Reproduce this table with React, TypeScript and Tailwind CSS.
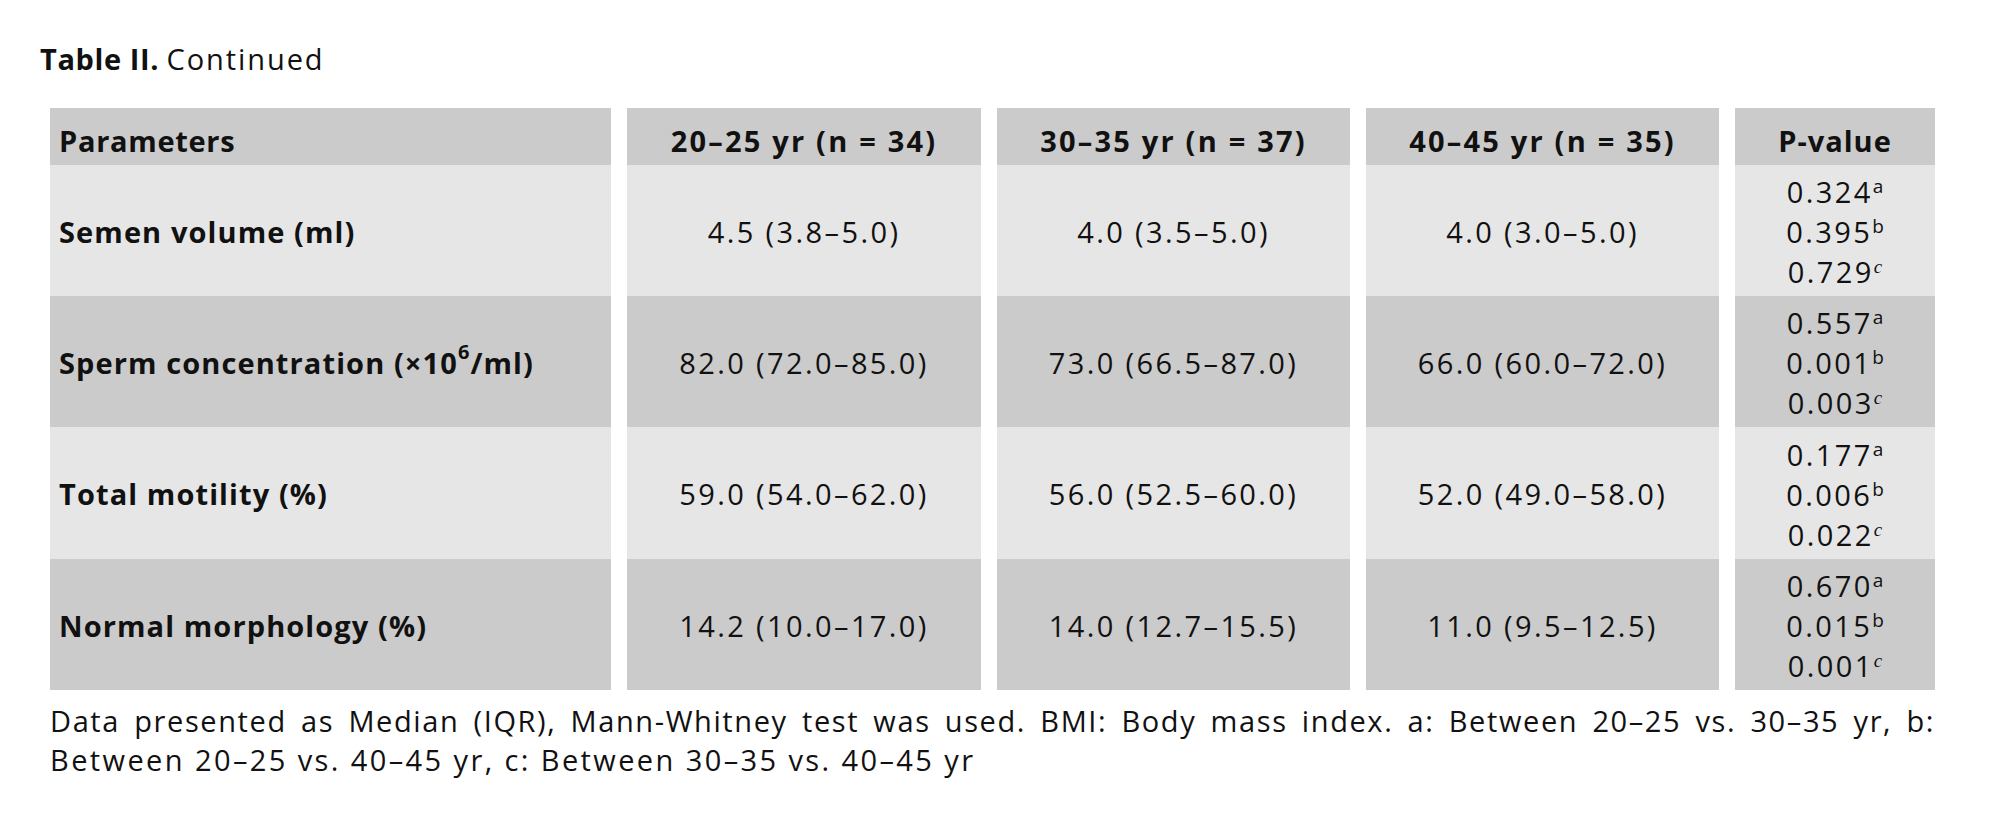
import React from "react";

const rows = [
  {
    label: <>Semen volume (ml)</>,
    v: ["4.5 (3.8–5.0)", "4.0 (3.5–5.0)", "4.0 (3.0–5.0)"],
    p: ["0.324", "0.395", "0.729"],
  },
  {
    label: (
      <>
        Sperm concentration (×10<sup className="text-[20px] relative -top-[11px]">6</sup>/ml)
      </>
    ),
    v: ["82.0 (72.0–85.0)", "73.0 (66.5–87.0)", "66.0 (60.0–72.0)"],
    p: ["0.557", "0.001", "0.003"],
  },
  {
    label: <>Total motility (%)</>,
    v: ["59.0 (54.0–62.0)", "56.0 (52.5–60.0)", "52.0 (49.0–58.0)"],
    p: ["0.177", "0.006", "0.022"],
  },
  {
    label: <>Normal morphology (%)</>,
    v: ["14.2 (10.0–17.0)", "14.0 (12.7–15.5)", "11.0 (9.5–12.5)"],
    p: ["0.670", "0.015", "0.001"],
  },
];

const sups = ["a", "b", "c"];

export default function App() {
  return (
    <div
      className="w-[2000px] h-[820px] bg-white text-[#111] overflow-hidden"
      style={{ fontFamily: "'Open Sans', Lato, sans-serif" }}
    >
      <div className="pt-[40px] pl-[40px] text-[29px] leading-[38px]">
        <span className="font-bold tracking-[0.6px]">Table II.</span>{" "}
        <span className="tracking-[1.9px]">Continued</span>
      </div>
      <div className="mt-[30px] ml-[50px] w-[1885px] grid grid-cols-[561px_354px_353px_353px_200px] grid-rows-[57px_131px_131px_132px_131px] gap-x-[16px] text-[29px]">
        <div className="bg-[#cbcbcb] flex items-end pb-[5px] pl-[9px] font-bold leading-[38px] tracking-[0.7px]">Parameters</div>
        <div className="bg-[#cbcbcb] flex items-end justify-center pb-[5px] font-bold leading-[38px] tracking-[2.2px]">20–25 yr (n = 34)</div>
        <div className="bg-[#cbcbcb] flex items-end justify-center pb-[5px] font-bold leading-[38px] tracking-[2.2px]">30–35 yr (n = 37)</div>
        <div className="bg-[#cbcbcb] flex items-end justify-center pb-[5px] font-bold leading-[38px] tracking-[2.2px]">40–45 yr (n = 35)</div>
        <div className="bg-[#cbcbcb] flex items-end justify-center pb-[5px] font-bold leading-[38px] tracking-[1px]">P-value</div>
        {rows.map((r, i) => {
          const bg = i % 2 === 0 ? "bg-[#e6e6e6]" : "bg-[#cbcbcb]";
          return (
            <React.Fragment key={i}>
              <div className={`${bg} flex items-center pl-[9px] pt-[2px] font-bold leading-[38px] tracking-[1.1px]`}>{r.label}</div>
              {r.v.map((v, j) => (
                <div key={j} className={`${bg} flex items-center justify-center pt-[2px] leading-[38px] tracking-[2.4px]`}>
                  {v}
                </div>
              ))}
              <div className={`${bg} flex flex-col items-center justify-center pt-[3px] leading-[40px] tracking-[2.4px]`}>
                {r.p.map((p, k) => (
                  <div key={k}>
                    {p}
                    <sup
                      className={`text-[19px] relative -top-[10px] tracking-normal ${k === 2 ? "italic" : ""}`}
                      style={k === 2 ? { fontFamily: "'Liberation Serif', serif" } : undefined}
                    >
                      {sups[k]}
                    </sup>
                  </div>
                ))}
              </div>
            </React.Fragment>
          );
        })}
      </div>
      <div className="ml-[50px] w-[1885px] mt-[11px] text-[29px] leading-[39px]">
        <p className="text-justify [text-align-last:justify] whitespace-nowrap tracking-[1.6px]">
          Data presented as Median (IQR), Mann-Whitney test was used. BMI: Body mass index. a: Between 20–25 vs. 30–35 yr, b:
        </p>
        <p className="tracking-[2.4px]">Between 20–25 vs. 40–45 yr, c: Between 30–35 vs. 40–45 yr</p>
      </div>
    </div>
  );
}
